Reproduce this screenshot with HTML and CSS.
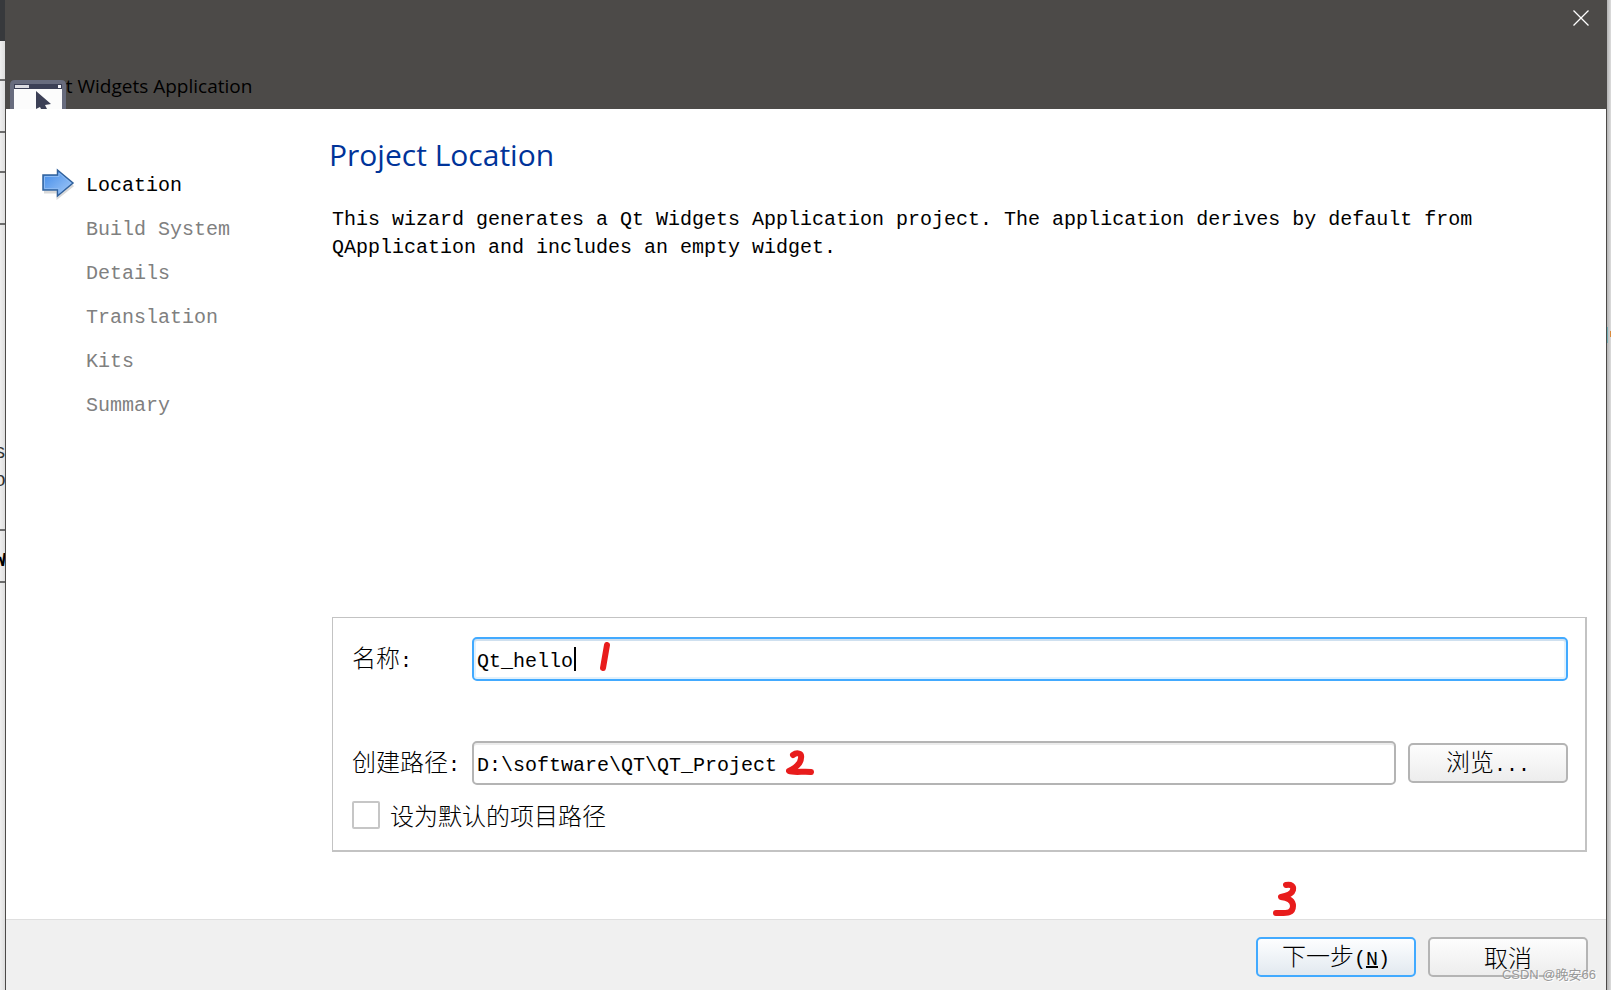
FILE: index.html
```html
<!DOCTYPE html>
<html lang="zh-CN">
<head>
<meta charset="utf-8">
<title>Qt Widgets Application</title>
<link rel="stylesheet" href="styles.css">
</head>
<body>
<div class="screen">
  <div class="behind behind-left" aria-hidden="true">
    <div class="behind-bar"></div>
    <div class="behind-row row-a"></div>
    <div class="behind-row row-b"></div>
    <div class="behind-row row-c"></div>
    <div class="behind-row row-b"></div>
    <div class="behind-row row-text"><span>s</span><span>o</span></div>
    <div class="behind-row row-b row-bold"><span>W</span></div>
  </div>

  <div class="dialog" role="dialog" aria-labelledby="dialog-name">
    <header class="titlebar">
      <span class="app-name" id="dialog-name">Qt Widgets Application</span>
      <svg class="app-icon" width="56" height="29" viewBox="0 0 56 29" aria-hidden="true">
        <path d="M0 29V5Q0 0 5 0H51Q56 0 56 5V29Z" fill="#686c7e"/>
        <rect x="4" y="4" width="48" height="25" fill="#fcfcfc"/>
        <rect x="4" y="4" width="48" height="5" fill="#3c4056"/>
        <rect x="5" y="5" width="14" height="3" fill="#dcdce2"/>
        <rect x="48" y="5" width="3" height="3" fill="#f4f4f8"/>
        <path d="M26 11L41 24L35 25L37 29H31L30 27L26 29Z" fill="#3c4056"/>
      </svg>
      <button class="close" type="button" aria-label="Close">
        <svg width="16" height="16" viewBox="0 0 16 16"><path d="M.5 .5L15.500 15.500M15.500 .5L.5 15.500" stroke="#fff" stroke-width="1.300" fill="none"/></svg>
      </button>
    </header>

    <div class="content">
      <ol class="steps">
        <li class="current">
          <svg class="arrow" width="34" height="32" viewBox="0 0 34 32" aria-hidden="true">
            <defs><linearGradient id="blue" x1="0" y1="0" x2="1" y2="1"><stop offset="0" stop-color="#3d88e8"/><stop offset="1" stop-color="#a9cdf8"/></linearGradient></defs>
            <path d="M2 24H16V29L31 17" fill="none" stroke="#d9d9d9" stroke-width="3"/>
            <path d="M1 7H15.500V2L31 15L15.500 28V22H1Z" fill="url(#blue)" stroke="#31619c" stroke-width="1.500"/>
            <path d="M2.500 8.500H17V5L28.500 15L17 25V20.500H2.500Z" fill="none" stroke="#8cbaf3"/>
          </svg>Location</li>
        <li>Build System</li>
        <li>Details</li>
        <li>Translation</li>
        <li>Kits</li>
        <li>Summary</li>
      </ol>

      <main class="page">
        <h1>Project Location</h1>
        <p class="intro">This wizard generates a Qt Widgets Application project. The application derives by default from QApplication and includes an empty widget.</p>

        <form class="group" id="location">
          <label class="cjk" for="name">名称<span class="latin">:</span></label>
          <div class="field field-name">
            <input id="name" class="text focused" type="text" value="Qt_hello">
            <span class="caret"></span>
            <svg class="mark mark-one" width="12" height="30" viewBox="0 0 12 30" aria-hidden="true"><path d="M8 3L4 26"/></svg>
          </div>
          <label class="cjk" for="path">创建路径<span class="latin">:</span></label>
          <div class="field">
            <input id="path" class="text" type="text" value="D:\software\QT\QT_Project">
            <svg class="mark mark-two" width="30" height="28" viewBox="0 0 30 28" aria-hidden="true"><path d="M7 6C11 3 16 4 15 9C15 14 9 19 3 22C8 24 18 22 25 23"/></svg>
          </div>
          <button class="button cjk" type="button">浏览<span class="latin">...</span></button>
          <label class="check cjk"><input type="checkbox">设为默认的项目路径</label>
        </form>
      </main>
    </div>

    <footer class="actions">
      <svg class="mark mark-three" width="28" height="36" viewBox="0 0 28 36" aria-hidden="true"><path d="M13 4C18 3 21 5 20 9C19 13 13 15 8 16C16 17 20 20 20 25C20 33 13 32 3 32"/></svg>
      <button class="button primary cjk" type="submit" form="location">下一步<span class="latin">(<u>N</u>)</span></button>
      <button class="button cjk" type="button">取消</button>
    </footer>
  </div>

  <div class="behind behind-right" aria-hidden="true"><i class="teal"></i><i class="orange"></i></div>
  <span class="watermark">CSDN @晚安66</span>
</div>
</body>
</html>
```

FILE: styles.css
```css
* { box-sizing: border-box; }

body {
  margin: 0;
  font: 20px/28px "Liberation Mono", "Noto Sans CJK SC", monospace;
  color: #000;
  background: #e9e9e9;
}

.screen {
  position: relative;
  display: grid;
  grid-template-columns: 5px minmax(0, 1fr) 4px;
  min-height: 100vh;
}

/* Slivers of the windows behind the dialog */
.behind { overflow: hidden; }
.behind-left { background: linear-gradient(90deg, #efefef, #dedede); }
.behind-bar { height: 41px; background: #37393c; }
.behind-row { border-bottom: 2px solid #6c6c6c; overflow: hidden; }
.row-a { height: 40px; }
.row-b { height: 52px; }
.row-c { height: 40px; }
.row-text { height: 306px; padding-top: 214px; color: #333; }
.row-text span { display: block; margin-left: -6px; }
.row-bold { padding-top: 16px; font-weight: bold; }
.row-bold span { margin-left: -6px; }
.behind-right { position: relative; background: linear-gradient(90deg, #b4b4b4, #dcdcdc); }
.teal, .orange { position: absolute; width: 1px; }
.teal { left: 0; top: 327px; height: 16px; background: #74aeb4; }
.orange { right: 0; top: 331px; height: 6px; background: #d98a3c; }

.dialog {
  display: flex;
  flex-direction: column;
  border: solid #4c4a48;
  border-width: 0 1px;
  background: #fff;
}

.titlebar {
  position: relative;
  height: 109px;
  background: #4c4a48;
}
.app-name {
  position: absolute;
  left: 45px;
  top: 72px;
  font: 19px/28px "Open Sans", sans-serif;
}
.app-icon { position: absolute; left: 4px; bottom: 0; }
.close {
  position: absolute;
  right: 17px;
  top: 10px;
  padding: 0;
  border: 0;
  background: none;
  line-height: 0;
}

.content {
  flex: 1;
  display: grid;
  grid-template-columns: 323px minmax(0, 1fr);
}

.steps {
  margin: 0;
  padding: 55px 0 0 80px;
  list-style: none;
  line-height: 44px;
  color: #808080;
}
.steps li { position: relative; }
.steps .current { color: #000; }
.arrow { position: absolute; left: -44px; top: 4px; }

.page {
  display: flex;
  flex-direction: column;
  padding: 26px 19px 67px 0;
}
h1 {
  margin: 0;
  font: 30px/40px "Open Sans", sans-serif;
  color: #003399;
}
.intro { margin: 31px 80px 0 3px; }

.group {
  display: grid;
  grid-template-columns: 108px minmax(0, 1fr) 160px;
  column-gap: 12px;
  align-items: center;
  margin: auto 0 0 3px;
  padding: 19px 17px 21px 19px;
  border: solid #c3c3c3;
  border-width: 1px 2px 2px 1px;
}
.cjk { font: 300 24px/28px "Noto Sans CJK SC", sans-serif; }
.latin { font: 20px/28px "Liberation Mono", monospace; }
.field { position: relative; }
.field-name { grid-column: 2 / 4; margin-bottom: 60px; }
.group > label:first-child { margin-bottom: 60px; }

.text {
  display: block;
  width: 100%;
  height: 44px;
  padding: 4px 4px 0 3px;
  border: 2px solid #b4b4b4;
  border-radius: 5px;
  background: #fff;
  box-shadow: inset 0 2px #ececec;
  font: inherit;
  color: #000;
  outline: 0;
}
.focused {
  border-color: #42aaff;
  box-shadow: inset 0 2px #cfe0ef, inset 0 0 0 2px #e2f1fc;
}
.caret {
  position: absolute;
  left: 102px;
  top: 10px;
  width: 2px;
  height: 24px;
  background: #000;
}

.check {
  grid-column: 1 / 4;
  display: flex;
  align-items: center;
  gap: 10px;
  margin-top: 16px;
}
.check input {
  appearance: none;
  width: 28px;
  height: 28px;
  margin: 0;
  border: 2px solid #c6c6c6;
  border-radius: 2px;
  background: #fff;
}

.button {
  width: 160px;
  height: 40px;
  padding: 0;
  border: 2px solid #b4b4b4;
  border-radius: 5px;
  background: linear-gradient(#fdfdfd, #ededed);
  color: #000;
}
.primary {
  border-color: #42aaff;
  background: linear-gradient(#fdfeff, #e2e9f0);
}

.actions {
  position: relative;
  display: flex;
  justify-content: flex-end;
  gap: 12px;
  padding: 17px 18px 13px;
  border-top: 1px solid #dfdfdf;
  background: #f0f0f0;
}

/* Red pen annotations */
.mark {
  position: absolute;
  fill: none;
  stroke: #e81c1c;
  stroke-width: 6;
  stroke-linecap: round;
  stroke-linejoin: round;
}
.mark-one { left: 127px; top: 5px; }
.mark-two { left: 314px; top: 8px; }
.mark-three { right: 305px; top: -39px; }

.watermark {
  position: absolute;
  right: 15px;
  bottom: 5px;
  font: 13px/20px "Liberation Sans", "Noto Sans CJK SC", sans-serif;
  color: #999;
  text-shadow: 1px 1px #fff;
}
```
